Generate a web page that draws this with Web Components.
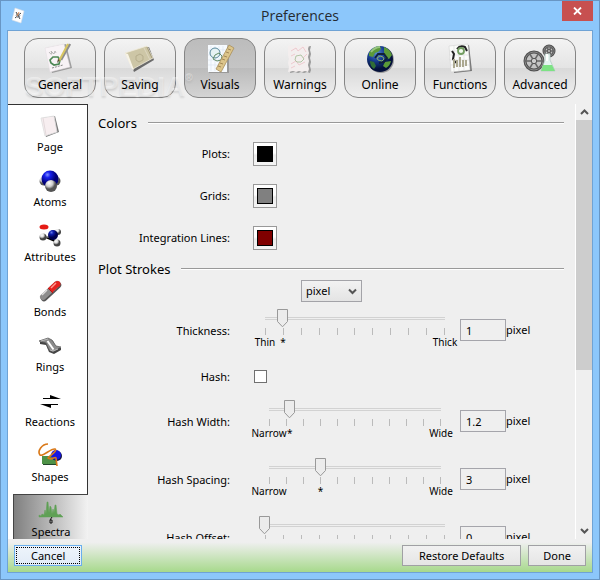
<!DOCTYPE html>
<html lang="en">
<head>
<meta charset="utf-8">
<title>Preferences</title>
<style>
html, body { margin: 0; height: 100%; }
body { font: 11px/14px "Noto Sans", "Open Sans", sans-serif; color: #000; }
</style>
</head>
<body>
<pref-window caption="Preferences">
  <tool-bar slot="tools">
    <tool-button icon="general">General</tool-button>
    <tool-button icon="saving">Saving</tool-button>
    <tool-button icon="visuals" selected>Visuals</tool-button>
    <tool-button icon="warnings">Warnings</tool-button>
    <tool-button icon="online">Online</tool-button>
    <tool-button icon="functions">Functions</tool-button>
    <tool-button icon="advanced">Advanced</tool-button>
  </tool-bar>
  <side-bar slot="side">
    <side-item icon="page">Page</side-item>
    <side-item icon="atoms">Atoms</side-item>
    <side-item icon="attributes">Attributes</side-item>
    <side-item icon="bonds">Bonds</side-item>
    <side-item icon="rings">Rings</side-item>
    <side-item icon="reactions">Reactions</side-item>
    <side-item icon="shapes">Shapes</side-item>
    <side-item icon="spectra" selected>Spectra</side-item>
  </side-bar>
  <section-title>Colors</section-title>
  <color-row label="Plots:" color="#000000"></color-row>
  <color-row label="Grids:" color="#808080"></color-row>
  <color-row label="Integration Lines:" color="#800000"></color-row>
  <section-title>Plot Strokes</section-title>
  <unit-select></unit-select>
  <slider-row label="Thickness:" value="1" low="Thin" high="Thick" inset="12"></slider-row>
  <check-row label="Hash:"></check-row>
  <slider-row label="Hash Width:" value="1.2" low="Narrow" high="Wide" inset="16"></slider-row>
  <slider-row label="Hash Spacing:" value="3" low="Narrow" high="Wide" inset="16"></slider-row>
  <slider-row label="Hash Offset:" value="0" inset="12"></slider-row>
  <push-button slot="cancel" focused>Cancel</push-button>
  <push-button slot="actions">Restore Defaults</push-button>
  <push-button slot="actions" narrow>Done</push-button>
</pref-window>
<script>
const svg = (w, h, body) => `<svg width="${w}" height="${h}" viewBox="0 0 ${w} ${h}" aria-hidden="true">${body}</svg>`;
const wheel = (x, y, r) => `<circle cx="${x}" cy="${y}" r="${r}" fill="#c4c4c4" stroke="#505050" stroke-width="3"/>
  <circle cx="${x}" cy="${y}" r="${r}" fill="none" stroke="#8a8a8a" stroke-width="1"/>
  <path d="M${x - r} ${y}H${x + r}M${x - r * .5} ${y - r * .85}L${x + r * .5} ${y + r * .85}M${x + r * .5} ${y - r * .85}L${x - r * .5} ${y + r * .85}" stroke="#666" stroke-width="1.6"/>
  <circle cx="${x}" cy="${y}" r="${r * .3}" fill="#ccc" stroke="#555"/>`;
const ICONS = {
  app: svg(14, 17, `<path d="M4 1L13 4L10 16L1 13Z" fill="#fff" stroke="#d7dce4" stroke-width=".6"/><path d="M5 5L9 12M10 6L4 11" stroke="#444"/><circle cx="7" cy="8.500" r="1.8" fill="none" stroke="#858b96"/><path d="M8 5L6 9" stroke="#df8a4e"/>`),
  general: svg(32, 32, `<path d="M3 6L22 2L28 26L8 31Z" fill="#777" opacity=".65"/><path d="M1 6L20 2L26 25L6 30Z" fill="#f8f3f6" stroke="#e2dde0" stroke-width=".5"/>
    <path d="M5 10q2 3 3 2l-1-3 3 3 1-3 1 2" fill="none" stroke="#aaa" stroke-width=".8"/><path d="M6 18l3-3 5 0 2 3-1 4-5 1-3-2z" fill="none" stroke="#4d8755" stroke-width="1.700"/><path d="M8 26L19 23" stroke="#888" stroke-dasharray="2 1"/>
    <path d="M26 2L17 18" stroke="#8d8d8d" stroke-width="2.500"/><path d="M24 2L15 19" stroke="#d8c661" stroke-width="2"/><path d="M14 17l-1 4 3-3z" fill="#544a32"/>`),
  saving: svg(32, 32, `<path d="M3 12L25 5L30 18L10 30Z" fill="#555" opacity=".85"/><path d="M1 11L23 4L29 16L9 27Z" fill="#cdc6a6" stroke="#f1ecdc" stroke-width=".8"/><path d="M1 11L8 27L10 28L4 12Z" fill="#f7f3e7"/><path d="M23 5L28 16" stroke="#a49b7b"/><path d="M12 14l4-2 3 2 0 4-4 2-3-2z" fill="none" stroke="#b5ad8c"/><path d="M20 6l6 12" stroke="#ddd7c0"/>`),
  visuals: svg(32, 32, `<path d="M5 5H25V31H5Z" fill="#999"/><path d="M4 3H23V30H4Z" fill="#f7fbff"/><path d="M7 4V29M11 4V29M15 4V29M19 4V29M4 8H23M4 13H23M4 18H23M4 23H23" stroke="#d8e2ef" stroke-width=".6"/>
    <circle cx="11" cy="11" r="5" fill="#e6f2f4" stroke="#56869a" stroke-width="1"/><path d="M9 17l2-4 4-2 3 3-1 4-4 1z" fill="none" stroke="#608a64" stroke-width="1"/>
    <path d="M25 3L30 6L17 30L12 27Z" fill="#dcc58b" stroke="#a98f5c" stroke-width=".8"/><path d="M24 7l3 1M22 10l3 1M20 14l3 1M18 17l3 1M16 21l3 1M14 24l3 1" stroke="#96794a" stroke-width=".8"/>`),
  warnings: svg(32, 32, `<path d="M5 5l4-1 4 1 4-1 4 1 6-1-1 4 1 4-1 4 1 4-1 4 1 4-1 3-3-1-3 1-3-1-3 1-3-1-5 1 1-5-1-4 1-4-1-4z" fill="#999"/>
    <path d="M4 4l4-1 4 1 4-1 4 1 5-1-1 4 1 4-1 4 1 4-1 4 1 4-1 3-3-1-3 1-3-1-3 1-3-1-5 1 1-5-1-4 1-4-1-4z" fill="#f3eeee"/>
    <path d="M7 9l5-3 2 3 5-4 3 5M7 14l4-2M19 16l4-4M7 22l5-3 3 4 6-3M7 26l4-2" fill="none" stroke="#ecc0c7" stroke-width=".8"/><path d="M11 18l1-4 5-1 3 4-3 3-4 0z" fill="none" stroke="#a9bf9c" stroke-width=".9"/>`),
  online: `<svg width="32" height="32" viewBox="0 0 32 32" aria-hidden="true"><defs><radialGradient id="g" cx=".35" cy=".25" r=".8"><stop offset="0" stop-color="#5b8fd6"/><stop offset=".4" stop-color="#173d8f"/><stop offset=".8" stop-color="#04103a"/></radialGradient></defs>
    <circle cx="17" cy="18" r="13" fill="#555" opacity=".5"/><circle cx="16" cy="17" r="13" fill="url(#g)"/><path d="M5 11q4-7 11-7l1 3-3 3-3 1-2 4-4-1zM20 5q6 2 8 8l-3 4-4-2-1-4zM21 20l6-1q-1 5-5 7l-3-2z" fill="#5b9a38"/><path d="M6 19l4 1 2 4-2 3q-4-3-4-8" fill="#306d36"/>
    <path d="M11 16l3-4 6 0 3 4-3 4-5 1" fill="none" stroke="#102039" stroke-width="1.800"/><path d="M13 16l3-2 3 1 1 2-2 2-4-1z" fill="none" stroke="#86ad6c"/><path d="M7 10q4-5 9-5" stroke="#d6efc6" stroke-width="2" fill="none" opacity=".5"/></svg>`,
  functions: svg(32, 32, `<path d="M8 5L25 3L28 29L10 31Z" fill="#777"/><path d="M5 4L24 2L26 28L7 30Z" fill="#fbfcfa" stroke="#ccc" stroke-width=".5"/><path d="M5 9H24M5 13H25M5 18H25M6 23H25M10 3V29M15 3V29M20 3V29" stroke="#dedede" stroke-width=".7"/>
    <path d="M8 9l2 3-1 5 3 4" fill="none" stroke="#222" stroke-width="2"/><path d="M13 7q3-4 8-2l2 4" fill="none" stroke="#222" stroke-width="2"/><circle cx="17" cy="9" r="3" fill="#f3faef" stroke="#729d61" stroke-width="1.800"/><path d="M10 26v-9M13 25v-7M16 25v-10M19 25v-7M22 24v-6" stroke="#aca990" stroke-width="2"/>`),
  advanced: svg(34, 32, wheel(11, 19, 9) + wheel(26, 9, 5) + `<path d="M22 12H27V18L32 29H18L22 18Z" fill="#e4f4f1" stroke="#b5c9c4" stroke-width=".8"/><path d="M20 23L18 29H32L29 23Z" fill="#7de284"/><path d="M24 12V19" stroke="#fff" stroke-width="2"/>`),
  page: svg(28, 28, `<path d="M7 6L19 4L23 20L10 25Z" fill="#777"/><path d="M5 6L18 4L21 20L9 24Z" fill="#f7eef0" stroke="#ddd" stroke-width=".8"/><path d="M7 6L10 23" stroke="#e3d9db"/>`),
  atoms: `<svg width="28" height="28" viewBox="0 0 28 28" aria-hidden="true"><defs><radialGradient id="b" cx=".35" cy=".25"><stop stop-color="#8090ff"/><stop offset=".35" stop-color="#1720ed"/><stop offset="1" stop-color="#000074"/></radialGradient><radialGradient id="w" cx=".35" cy=".25"><stop stop-color="#fff"/><stop offset=".6" stop-color="#ccc"/><stop offset="1" stop-color="#555"/></radialGradient></defs><circle cx="8" cy="14" r="4.500" fill="url(#w)"/><circle cx="20" cy="14" r="4.500" fill="url(#w)"/><circle cx="14" cy="12" r="8.500" fill="url(#b)"/><circle cx="15" cy="19" r="6" fill="url(#w)"/></svg>`,
  attributes: `<svg width="28" height="28" viewBox="0 0 28 28" aria-hidden="true"><defs><radialGradient id="b" cx=".35" cy=".25"><stop stop-color="#6075e5"/><stop offset=".4" stop-color="#101fae"/><stop offset="1" stop-color="#00004e"/></radialGradient><radialGradient id="w" cx=".35" cy=".25"><stop stop-color="#fff"/><stop offset=".5" stop-color="#ddd"/><stop offset="1" stop-color="#444"/></radialGradient></defs><ellipse cx="8" cy="5" rx="4.500" ry="2.500" fill="#e51b15"/><path d="M7 15H17L21 21M17 14L22 10" stroke="#777" stroke-width="1.500"/><circle cx="22" cy="10" r="3" fill="url(#w)"/><circle cx="17" cy="13" r="5" fill="url(#b)"/><circle cx="7" cy="15" r="3.500" fill="url(#w)"/><circle cx="21" cy="21" r="3.500" fill="url(#w)"/></svg>`,
  bonds: svg(28, 28, `<path d="M8 21L22 8" stroke="#555" stroke-width="6.500" stroke-linecap="round"/><path d="M7 20L21 7" stroke="#8d8d8d" stroke-width="6" stroke-linecap="round"/><path d="M14 13.500L21 7" stroke="#e52320" stroke-width="6"/><circle cx="21.500" cy="7" r="3" fill="#e52320"/><path d="M12 11l5 5" stroke="#b31613"/><path d="M6 18L11 13" stroke="#ddd" stroke-width="1.500"/><path d="M15 11L20 6" stroke="#ff9b90" stroke-width="1.500"/>`),
  rings: svg(28, 28, `<path d="M4 10L13 7L17 9L20 15L25 16V18L18 22L13 20L10 13L4 12Z" fill="#444"/><path d="M3 9L12 6L16 8L20 14L25 15L17 20L13 18L10 11Z" fill="#8b8b8b" stroke="#555" stroke-width=".7"/><path d="M11.500 9L17.500 17.500" stroke="#fff" stroke-width="2"/><path d="M5 9L12 7M14 18L17 19L22 17" fill="none" stroke="#bbb"/>`),
  reactions: svg(28, 28, `<path d="M7 12H25L14 8V11H7Z"/><path d="M4 17H22V18H15V21Z"/>`),
  shapes: svg(28, 28, `<path d="M7 15H21V23H7Z" fill="#23462b"/><path d="M6 14H20V22H6Z" fill="#4e9247"/><circle cx="21" cy="14" r="5" fill="#151545"/><circle cx="20" cy="13" r="5" fill="#1717e2"/><path d="M12 2C6 2 1 9 4 13C7 15 15 6 19 7C22 9 13 14 12 16C15 19 19 14 20 16L21 24" fill="none" stroke="#da7919" stroke-width="1.600"/>`),
  spectra: svg(28, 28, `<path d="M2 20V18L4 19L5 17L7 18L8 13L9 17L10 5L11 5L12 16L13 9L14 10L15 17L16 12L17 16L18 8L19 8L20 17L22 18L23 17L26 20Z" fill="#5fa055" stroke="#5fa055" stroke-width=".5"/><path d="M15 20l-2 3v3h2v-3h-2" fill="none" stroke="#111"/>`)
};
function define(name, render, after) {
  customElements.define(name, class extends HTMLElement {
    connectedCallback() {
      if (this.shadowRoot) return;
      const root = this.attachShadow({ mode: "open" });
      const t = document.createElement("template");
      t.innerHTML = render(this);
      root.append(t.content.cloneNode(true));
      if (after) after(this, root);
    }
  });
}
const attr = (el, n) => el.getAttribute(n) || "";
const ROW = `display: grid; grid-template-columns: 142px minmax(0, 1fr) 46px 69px;`;

define("pref-window", el => `<style>
  :host { display: flex; flex-direction: column; box-sizing: border-box; height: 100vh; background: #8cc7fb; border: 1px solid #6896c4; }
  header { display: grid; grid-template-columns: 60px 1fr 60px; height: 29px; flex: none; }
  .app { padding: 6px 0 0 10px; }
  h1 { margin: 0; font: 14px/29px "Open Sans", sans-serif; text-align: center; color: #252a30; }
  .close { justify-self: end; width: 31px; height: 20px; margin-right: 6px; padding: 0; border: 0; background: #c75050; display: grid; place-items: center; }
  .client { flex: 1; min-height: 0; display: flex; flex-direction: column; margin: 0 6px 6px; border: 1px solid #6fa3d5; background: #efefef; }
  .mid { flex: 1; min-height: 0; display: flex; }
  main { flex: 1; min-width: 0; overflow: hidden; padding-top: 9px; }
  .bar { display: flex; flex-direction: column; width: 16px; border-left: 1px solid #fff; }
  .bar button { height: 16px; flex: none; padding: 0; border: 0; background: none; display: grid; place-items: center; }
  .rail { flex: 1; } .thumb { height: 62%; background: #cdcdcd; }
  footer { flex: none; display: flex; gap: 7px; padding: 6px; height: 21px; background: linear-gradient(#efefef 10%, #a7d98c); }
  .gap { flex: 1; }
</style>
<header><span class="app">${ICONS.app}</span><h1>${attr(el, "caption")}</h1>
<button class="close" aria-label="Close">${svg(9, 8, '<path d="M1 0.500L8 7.500M8 0.500L1 7.500" stroke="#fff" stroke-width="1.800"/>')}</button></header>
<div class="client"><slot name="tools"></slot>
<div class="mid"><slot name="side"></slot><main><slot></slot></main>
<div class="bar"><button aria-label="Scroll up">${svg(9, 6, '<path d="M1 5L4.500 1.500L8 5" fill="none" stroke="#555" stroke-width="2"/>')}</button><div class="rail"><div class="thumb"></div></div><button aria-label="Scroll down">${svg(9, 6, '<path d="M1 1L4.500 4.500L8 1" fill="none" stroke="#555" stroke-width="2"/>')}</button></div></div>
<footer><slot name="cancel"></slot><span class="gap"></span><slot name="actions"></slot></footer></div>`);

define("tool-bar", () => `<style>
  :host { display: flex; gap: 8px; flex: none; padding: 7px 16px 6px; position: relative; }
  .mark { position: absolute; left: 17px; top: 39px; font: bold 28px/34px "Liberation Sans", sans-serif; color: rgba(255, 255, 255, .4); text-shadow: 0 2px 2px rgba(0, 0, 0, .1); pointer-events: none; }
  sup { font-size: 10px; line-height: 10px; vertical-align: 15px; }
</style><slot></slot><span class="mark" aria-hidden="true">SOFTPEDIA<sup>®</sup></span>`);

define("tool-button", el => `<style>
  :host { display: flex; flex: 1; }
  button { flex: 1; min-width: 0; height: 60px; box-sizing: border-box; padding: 3px 0 0; border: 1px solid #858585; border-radius: 14px; display: flex; flex-direction: column; align-items: center; gap: 4px; color: #000; font: 12px/14px "Noto Sans", "Open Sans", sans-serif; background: linear-gradient(#f3f3f3, #e4e4e4 50%, #d9d9d9 50%, #efefef); }
  :host([selected]) button { background: linear-gradient(#bcbcbc, #c5c5c5 50%, #bbb 50%, #d4d4d4); }
  svg { flex: none; }
  span { position: relative; z-index: 1; }
</style><button aria-pressed="${el.hasAttribute("selected")}">${ICONS[attr(el, "icon")]}<span><slot></slot></span></button>`);

define("side-bar", () => `<style>
  :host { display: flex; flex-direction: column; flex: none; width: 80px; box-sizing: border-box; padding: 4px 0 0 5px; border-top: 1px solid #333; border-right: 1px solid #333; background: #fff; }
</style><slot></slot>`);

define("side-item", el => `<style>
  :host { display: block; flex: none; height: 55px; }
  button { box-sizing: border-box; width: 100%; height: 55px; padding: 3px 0 0; border: 0; background: none; display: flex; flex-direction: column; align-items: center; color: #000; font: 11px/14px "Noto Sans", "Open Sans", sans-serif; }
  :host([selected]) { margin-right: -1px; height: 45px; }
  :host([selected]) button { height: 45px; padding-top: 2px; border: 1px solid #444; border-width: 1px 0 0 1px; background: linear-gradient(90deg, #808080, #f2f2f2); }
  svg { flex: none; }
</style><button>${ICONS[attr(el, "icon")]}<slot></slot></button>`);

define("section-title", () => `<style>
  :host { display: flex; align-items: center; gap: 11px; height: 20px; padding: 0 11px 0 10px; }
  h2 { margin: 0; font: 13px/20px "Noto Sans", "Open Sans", sans-serif; }
  i { flex: 1; height: 1px; background: #999; border-bottom: 1px solid #fff; }
</style><h2><slot></slot></h2><i></i>`);

define("color-row", el => `<style>
  :host { ${ROW} height: 42px; align-items: center; }
  label { text-align: right; }
  input { appearance: none; box-sizing: border-box; width: 24px; height: 24px; margin: 0 0 0 23px; padding: 3px; border: 1px solid #999; background: linear-gradient(#fff 45%, #ececec 55%, #f4f4f4); }
  input::-webkit-color-swatch-wrapper { padding: 0; }
  input::-webkit-color-swatch { border: 1px solid #000; border-radius: 0; }
</style><label for="c">${attr(el, "label")}</label><input id="c" type="color" value="${attr(el, "color")}">`);

define("unit-select", () => `<style>
  :host { display: flex; justify-content: center; height: 23px; align-items: flex-end; }
  .box { display: grid; width: 61px; align-items: center; }
  select { grid-area: 1 / 1; appearance: none; box-sizing: border-box; height: 22px; padding: 0 4px; border: 1px solid #a3a3a8; border-radius: 0; background: linear-gradient(#f2f2f2, #e4e4e4); color: #000; font: 11px/14px "Noto Sans", "Open Sans", sans-serif; }
  svg { grid-area: 1 / 1; justify-self: end; margin-right: 5px; pointer-events: none; }
</style><div class="box"><select aria-label="Stroke unit"><option>pixel</option></select>${svg(9, 7, '<path d="M1 1.500L4.500 5L8 1.500" fill="none" stroke="#555" stroke-width="2"/>')}</div>`);

define("check-row", el => `<style>
  :host { ${ROW} height: 33px; align-items: center; }
  label { text-align: right; }
  input { appearance: none; box-sizing: border-box; width: 13px; height: 13px; margin: 0 0 0 24px; border: 1px solid #707070; background: #fff; }
  input:checked { background: #555; }
</style><label for="c">${attr(el, "label")}</label><input id="c" type="checkbox">`);

const THUMB = `url("data:image/svg+xml,%3Csvg xmlns='http://www.w3.org/2000/svg' width='12' height='19'%3E%3Cpath d='M.5 .5H10.500V12.500L5.500 17.800L.5 12.500Z' fill='%23ececec' stroke='%23999'/%3E%3C/svg%3E")`;
define("slider-row", el => {
  const inset = Number(attr(el, "inset")), v = Number(attr(el, "value"));
  return `<style>
  :host { ${ROW} height: 58px; }
  .name { text-align: right; padding-top: 22px; }
  .slide { margin: 0 3px 0 23px; padding: 7px ${inset - 6}px 0; font-size: 10px; line-height: 12px; }
  .slide input { appearance: none; display: block; box-sizing: border-box; width: 100%; height: 19px; margin: 0; background: linear-gradient(#d2d2d2, #d2d2d2) 6px 8px / calc(100% - 12px) 1px no-repeat, linear-gradient(#d2d2d2, #d2d2d2) 6px 10px / calc(100% - 12px) 1px no-repeat; }
  .slide input::-webkit-slider-thumb { appearance: none; width: 12px; height: 19px; border: 0; background: ${THUMB}; }
  .ticks, .marks { margin: 0 6px; }
  .ticks { display: flex; justify-content: space-between; height: 7px; }
  .ticks i { width: 1px; background: #bbb; }
  .marks { display: grid; padding-top: 1px; }
  .marks span { grid-area: 1 / 1; width: 0; display: flex; justify-content: center; white-space: nowrap; }
  .marks .star { margin-left: ${v * 10}%; }
  .marks .high { justify-self: end; }
  .num { box-sizing: border-box; width: 46px; height: 22px; margin: 17px 0 0; padding: 0 6px 0 5px; border: 1px solid #a5a5ab; border-radius: 0; background: #efefef; color: #000; font: 11px/14px "Noto Sans", "Open Sans", sans-serif; }
  .unit { padding-top: 21px; }
</style>
<label class="name" for="r">${attr(el, "label")}</label>
<div class="slide"><input id="r" type="range" min="0" max="10" step="0.1" value="${v}">
<div class="ticks">${"<i></i>".repeat(11)}</div>
<div class="marks"><span>${attr(el, "low")}</span>${v ? '<span class="star">*</span>' : ""}<span class="high">${attr(el, "high")}</span></div></div>
<input class="num" id="n" value="${v}"><label class="unit" for="n">pixel</label>`;
}, (el, root) => {
  const r = root.getElementById("r"), n = root.getElementById("n");
  r.addEventListener("input", () => { n.value = r.value; });
  n.addEventListener("change", () => { r.value = n.value; });
});

define("push-button", () => `<style>
  :host { display: flex; flex: none; }
  button { box-sizing: border-box; height: 21px; padding: 0 16px; border: 1px solid #a0a0a4; background: linear-gradient(#f1f1f1, #e5e5e5); color: #000; font: 11px/14px "Noto Sans", "Open Sans", sans-serif; }
  :host([narrow]) button { padding: 0 14px; }
  :host([focused]) button { border-color: #6aaeee; background: linear-gradient(#eef4fb, #e2ecf7); outline: 1px dotted #000; outline-offset: -3px; }
</style><button><slot></slot></button>`);
</script>
</body>
</html>
